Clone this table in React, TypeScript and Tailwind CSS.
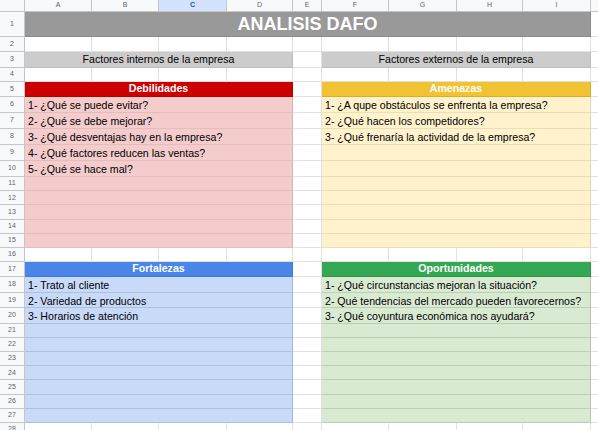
import type { ReactNode } from "react";

const COLS = ["A", "B", "C", "D", "E", "F", "G", "H", "I"];
const WIDTHS = [67, 67, 68, 66, 29, 67, 68, 66, 68];

type Block = {
	bg: string;
	line: string;
	edge: string;
};

const PINK: Block = { bg: "bg-[#f4cccc]", line: "border-b-[#e3bcbc]", edge: "border-r-[#d9b3b3]" };
const YELLOW: Block = { bg: "bg-[#fff2cc]", line: "border-b-[#ecdfb8]", edge: "border-r-[#e2d5ae]" };
const BLUE: Block = { bg: "bg-[#c9daf8]", line: "border-b-[#adc0e0]", edge: "border-r-[#a5b8da]" };
const GREEN: Block = { bg: "bg-[#d9ead3]", line: "border-b-[#bccfb5]", edge: "border-r-[#b6c9af]" };

const font = "font-['Liberation_Sans',Arial,sans-serif]";

function RowHead({ n, h }: { n: number | string; h: number }) {
	return (
		<div
			className="w-[25px] shrink-0 flex items-center justify-center border-r border-b border-[#c4c7c5] bg-[#f8f9fa] text-[7px] text-[#5f6368]"
			style={{ height: h }}
		>
			{n}
		</div>
	);
}

function Row({ n, h, children }: { n: number; h: number; children: ReactNode }) {
	return (
		<div className="flex" style={{ height: h }}>
			<RowHead n={n} h={h} />
			{children}
			<div className="flex-1 border-b border-[#e1e1e1]" />
		</div>
	);
}

function Blank({ w }: { w: number }) {
	return <div className="shrink-0 h-full border-r border-b border-[#e1e1e1] bg-white" style={{ width: w }} />;
}

function EmptyRow({ n, h }: { n: number; h: number }) {
	return (
		<Row n={n} h={h}>
			{WIDTHS.map((w, i) => (
				<Blank key={i} w={w} />
			))}
		</Row>
	);
}

function Cell({ b, text, w }: { b: Block; text?: string; w: number }) {
	return (
		<div
			className={`shrink-0 h-full flex items-end pb-[1px] pl-[3px] border-r border-b text-[10.6px] leading-none text-black whitespace-nowrap overflow-hidden ${b.bg} ${b.line} ${b.edge}`}
			style={{ width: w }}
		>
			{text}
		</div>
	);
}

function BlockRow({
	n,
	h,
	left,
	right,
	lt,
	rt,
}: {
	n: number;
	h: number;
	left: Block;
	right: Block;
	lt?: string;
	rt?: string;
}) {
	return (
		<Row n={n} h={h}>
			<Cell b={left} text={lt} w={268} />
			<Blank w={29} />
			<Cell b={right} text={rt} w={269} />
		</Row>
	);
}

function HeadRow({ n, h, lt, rt, lc, rc }: { n: number; h: number; lt: string; rt: string; lc: string; rc: string }) {
	return (
		<Row n={n} h={h}>
			<div className={`w-[268px] shrink-0 h-full flex items-center justify-center font-bold text-[10.6px] text-white border-b border-r border-black/10 ${lc}`}>
				{lt}
			</div>
			<Blank w={29} />
			<div className={`w-[269px] shrink-0 h-full flex items-center justify-center font-bold text-[10.6px] text-white border-b border-r border-black/10 ${rc}`}>
				{rt}
			</div>
		</Row>
	);
}

const DEB = [
	"1- ¿Qué se puede evitar?",
	"2- ¿Qué se debe mejorar?",
	"3- ¿Qué desventajas hay en la empresa?",
	"4- ¿Qué factores reducen las ventas?",
	"5- ¿Qué se hace mal?",
];
const AME = [
	"1- ¿A qupe obstáculos se enfrenta la empresa?",
	"2- ¿Qué hacen los competidores?",
	"3- ¿Qué frenaría la actividad de la empresa?",
];
const FOR = ["1- Trato al cliente", "2- Variedad de productos", "3- Horarios de atención"];
const OPO = [
	"1- ¿Qué circunstancias mejoran la situación?",
	"2- Qué tendencias del mercado pueden favorecernos?",
	"3- ¿Qué coyuntura económica nos ayudará?",
];

export default function App() {
	return (
		<div className={`w-[598px] h-[430px] overflow-hidden bg-white ${font}`}>
			{/* column letters */}
			<div className="flex h-[12px]">
				<div className="w-[25px] shrink-0 border-r border-b border-[#c4c7c5] bg-[#f8f9fa]" />
				{COLS.map((c, i) => (
					<div
						key={c}
						className={`shrink-0 flex items-center justify-center border-r border-b border-[#c4c7c5] text-[7px] ${
							c === "C" ? "bg-[#d3e3fd] text-[#0b57d0] font-bold" : "bg-[#f8f9fa] text-[#5f6368]"
						}`}
						style={{ width: WIDTHS[i] }}
					>
						{c}
					</div>
				))}
				<div className="flex-1 border-b border-[#c4c7c5] bg-[#f8f9fa]" />
			</div>

			<Row n={1} h={25}>
				<div className="w-[566px] shrink-0 h-full flex items-center justify-center bg-[#999999] text-white font-bold text-[18px] border-b border-r border-[#8a8a8a]">
					ANALISIS DAFO
				</div>
			</Row>
			<EmptyRow n={2} h={15} />
			<Row n={3} h={16}>
				<div className="w-[268px] shrink-0 h-full flex items-center justify-center bg-[#cccccc] text-[10.6px] text-black border-b border-r border-[#bdbdbd]">
					Factores internos de la empresa
				</div>
				<Blank w={29} />
				<div className="w-[269px] shrink-0 h-full flex items-center justify-center bg-[#cccccc] text-[10.6px] text-black border-b border-r border-[#bdbdbd]">
					Factores externos de la empresa
				</div>
			</Row>
			<EmptyRow n={4} h={14} />
			<HeadRow n={5} h={15} lt="Debilidades" rt="Amenazas" lc="bg-[#cc0000]" rc="bg-[#f1c232]" />
			{Array.from({ length: 10 }, (_, i) => (
				<BlockRow
					key={i}
					n={6 + i}
					h={i < 5 ? 16 : 14.2}
					left={PINK}
					right={YELLOW}
					lt={DEB[i]}
					rt={AME[i]}
				/>
			))}
			<EmptyRow n={16} h={14} />
			<HeadRow n={17} h={15} lt="Fortalezas" rt="Oportunidades" lc="bg-[#4a86e8]" rc="bg-[#34a853]" />
			{Array.from({ length: 10 }, (_, i) => (
				<BlockRow
					key={i}
					n={18 + i}
					h={i < 3 ? 15.67 : 14.14}
					left={BLUE}
					right={GREEN}
					lt={FOR[i]}
					rt={OPO[i]}
				/>
			))}
			<EmptyRow n={28} h={14} />
		</div>
	);
}
